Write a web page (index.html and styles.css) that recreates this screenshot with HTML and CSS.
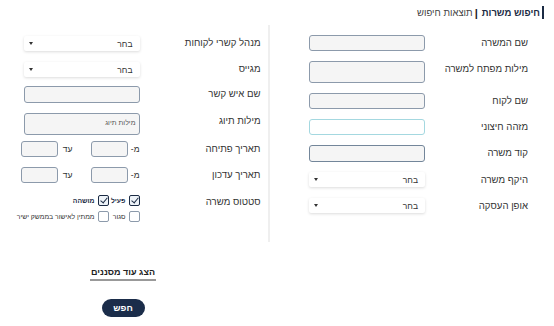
FILE: index.html
```html
<!DOCTYPE html>
<html lang="he" dir="rtl">
<head>
  <meta charset="UTF-8" />
  <title>חיפוש משרות</title>
  <link rel="stylesheet" href="styles.css">
</head>
<body>
  <header class="tabs">
    <span class="tab active">חיפוש משרות</span>
    <span class="sep">|</span>
    <span class="tab">תוצאות חיפוש</span>
  </header>

  <main class="filters">
    <section class="col col-right">
      <div class="row">
        <label class="label">שם המשרה</label>
        <input class="field" type="text" />
      </div>
      <div class="row">
        <label class="label">מילות מפתח למשרה</label>
        <textarea class="field tall"></textarea>
      </div>
      <div class="row">
        <label class="label">שם לקוח</label>
        <input class="field" type="text" />
      </div>
      <div class="row">
        <label class="label">מזהה חיצוני</label>
        <input class="field focus" type="text" />
      </div>
      <div class="row">
        <label class="label">קוד משרה</label>
        <input class="field dark" type="text" />
      </div>
      <div class="row">
        <label class="label">היקף משרה</label>
        <div class="select"><span>בחר</span><i class="caret"></i></div>
      </div>
      <div class="row">
        <label class="label">אופן העסקה</label>
        <div class="select"><span>בחר</span><i class="caret"></i></div>
      </div>
    </section>

    <section class="col col-left">
      <div class="row">
        <label class="label">מנהל קשרי לקוחות</label>
        <div class="select"><span>בחר</span><i class="caret"></i></div>
      </div>
      <div class="row">
        <label class="label">מגייס</label>
        <div class="select"><span>בחר</span><i class="caret"></i></div>
      </div>
      <div class="row r-contact">
        <label class="label">שם איש קשר</label>
        <input class="field" type="text" />
      </div>
      <div class="row">
        <label class="label">מילות תיוג</label>
        <textarea class="field tall" placeholder="מילות תיוג"></textarea>
      </div>
      <div class="row r-date">
        <label class="label">תאריך פתיחה</label>
        <div class="dates">
          <span class="from">מ-</span><input class="date" type="text" />
          <span class="to">עד</span><input class="date" type="text" />
        </div>
      </div>
      <div class="row r-date">
        <label class="label">תאריך עדכון</label>
        <div class="dates">
          <span class="from">מ-</span><input class="date" type="text" />
          <span class="to">עד</span><input class="date" type="text" />
        </div>
      </div>
      <div class="row r-status">
        <label class="label">סטטוס משרה</label>
        <div class="checks">
          <label class="check on"><i class="box"></i><b>פעיל</b></label>
          <label class="check on"><i class="box"></i><b>מושהה</b></label>
          <label class="check"><i class="box"></i>סגור</label>
          <label class="check"><i class="box"></i>ממתין לאישור בממשק ישיר</label>
        </div>
      </div>
    </section>
  </main>

  <div class="actions">
    <a class="more" href="#">הצג עוד מסננים</a>
    <button class="search">חפש</button>
  </div>
</body>
</html>
```

FILE: styles.css
```css
body {
  margin: 0;
  font-family: "Liberation Sans", Arial, sans-serif;
  color: #333;
  background: #fff;
  width: 554px;
}

.tabs {
  height: 25px;
  display: flex;
  align-items: center;
  padding-right: 10px;
  font-size: 9.5px;
  color: #444;
}

.tab.active {
  font-weight: bold;
  color: #1b2b44;
  border-right: 2px solid #1b2b44;
  padding-right: 2px;
  line-height: 13px;
}

.sep {
  margin: 0 4px 0 2px;
  color: #222;
  font-weight: bold;
  font-size: 11px;
}

.filters {
  display: flex;
}

.col {
  display: flex;
  flex-direction: column;
  gap: 10px;
  padding-top: 10px;
}

.col-right {
  width: 260px;
  padding-right: 26px;
}

.col-left {
  width: 262px;
  padding-right: 7px;
  padding-bottom: 20px;
  border-right: 2px solid #efefef;
}

.row {
  display: flex;
  align-items: flex-start;
}

.label {
  font-size: 9.6px;
  line-height: 16px;
  white-space: nowrap;
}

.col-right .label {
  width: 103px;
}

.col-left .label {
  width: 121px;
}

.field {
  box-sizing: border-box;
  width: 116px;
  height: 16px;
  margin: 0;
  border: 1px solid #8c9aab;
  border-radius: 3px;
  background: #f5f5f5;
  font-family: inherit;
  padding: 0 3px;
  resize: none;
}

.field.tall {
  height: 22px;
  font-size: 7px;
  padding-top: 5px;
}

.field.tall::placeholder {
  color: #555;
}

.field.focus {
  border-color: #a4d8e0;
  background: #fff;
}

.field.dark {
  height: 17px;
  border-color: #73869a;
}

.select {
  box-sizing: border-box;
  width: 116px;
  height: 15px;
  display: flex;
  align-items: center;
  justify-content: space-between;
  padding: 0 7px 0 5px;
  background: #fff;
  border-radius: 2px;
  box-shadow: 0 1px 3px rgba(0, 0, 0, 0.14);
  font-size: 8.5px;
  color: #333;
}

.col-left .select {
  margin-top: 1px;
}

.caret {
  width: 0;
  height: 0;
  border-left: 2.5px solid transparent;
  border-right: 2.5px solid transparent;
  border-top: 3px solid #333;
}

.col-left .r-contact {
  margin-top: -1px;
}

.col-left .r-contact .field {
  height: 17px;
}

.r-date {
  margin-top: -4px;
}

.r-date + .r-date {
  margin-top: 0;
}

.dates {
  display: flex;
  align-items: center;
  font-size: 8.5px;
}

.date {
  box-sizing: border-box;
  width: 37px;
  height: 16px;
  margin: 0;
  border: 1px solid #8c9aab;
  border-radius: 3px;
  background: #f5f5f5;
}

.from {
  width: 12px;
}

.to {
  width: 33px;
  padding-right: 18px;
  box-sizing: border-box;
}

.r-status {
  margin-top: 3px;
}

.r-status .label {
  line-height: 12px;
}

.checks {
  display: grid;
  grid-template-columns: 31px auto;
  row-gap: 5px;
  font-size: 6.8px;
  margin-top: -1px;
}

.check {
  display: flex;
  align-items: center;
  gap: 3px;
  white-space: nowrap;
}

.check b {
  color: #1b2b44;
}

.box {
  box-sizing: border-box;
  width: 11px;
  height: 11px;
  border: 1px solid #8c9aab;
  border-radius: 2px;
  background: #fff;
  position: relative;
}

.check.on .box {
  border-color: #1b2b44;
  background: #eef3f8;
}

.check.on .box::after {
  content: "";
  position: absolute;
  left: 3px;
  top: 0;
  width: 3px;
  height: 6px;
  border: solid #1b2b44;
  border-width: 0 1.3px 1.3px 0;
  transform: rotate(40deg);
}

.actions {
  width: 246px;
  margin-inline-start: auto;
  display: flex;
  flex-direction: column;
  align-items: center;
}

.more {
  margin-top: 25px;
  font-size: 9px;
  font-weight: bold;
  color: #222;
  text-decoration: none;
  padding: 0 1px 2px;
  border-bottom: 2px solid #999;
}

.search {
  margin-top: 18px;
  width: 43px;
  height: 18px;
  border: none;
  border-radius: 9px;
  background: #1b2d4a;
  color: #fff;
  font-family: inherit;
  font-weight: bold;
  font-size: 9px;
  padding: 0;
  cursor: pointer;
}
```
